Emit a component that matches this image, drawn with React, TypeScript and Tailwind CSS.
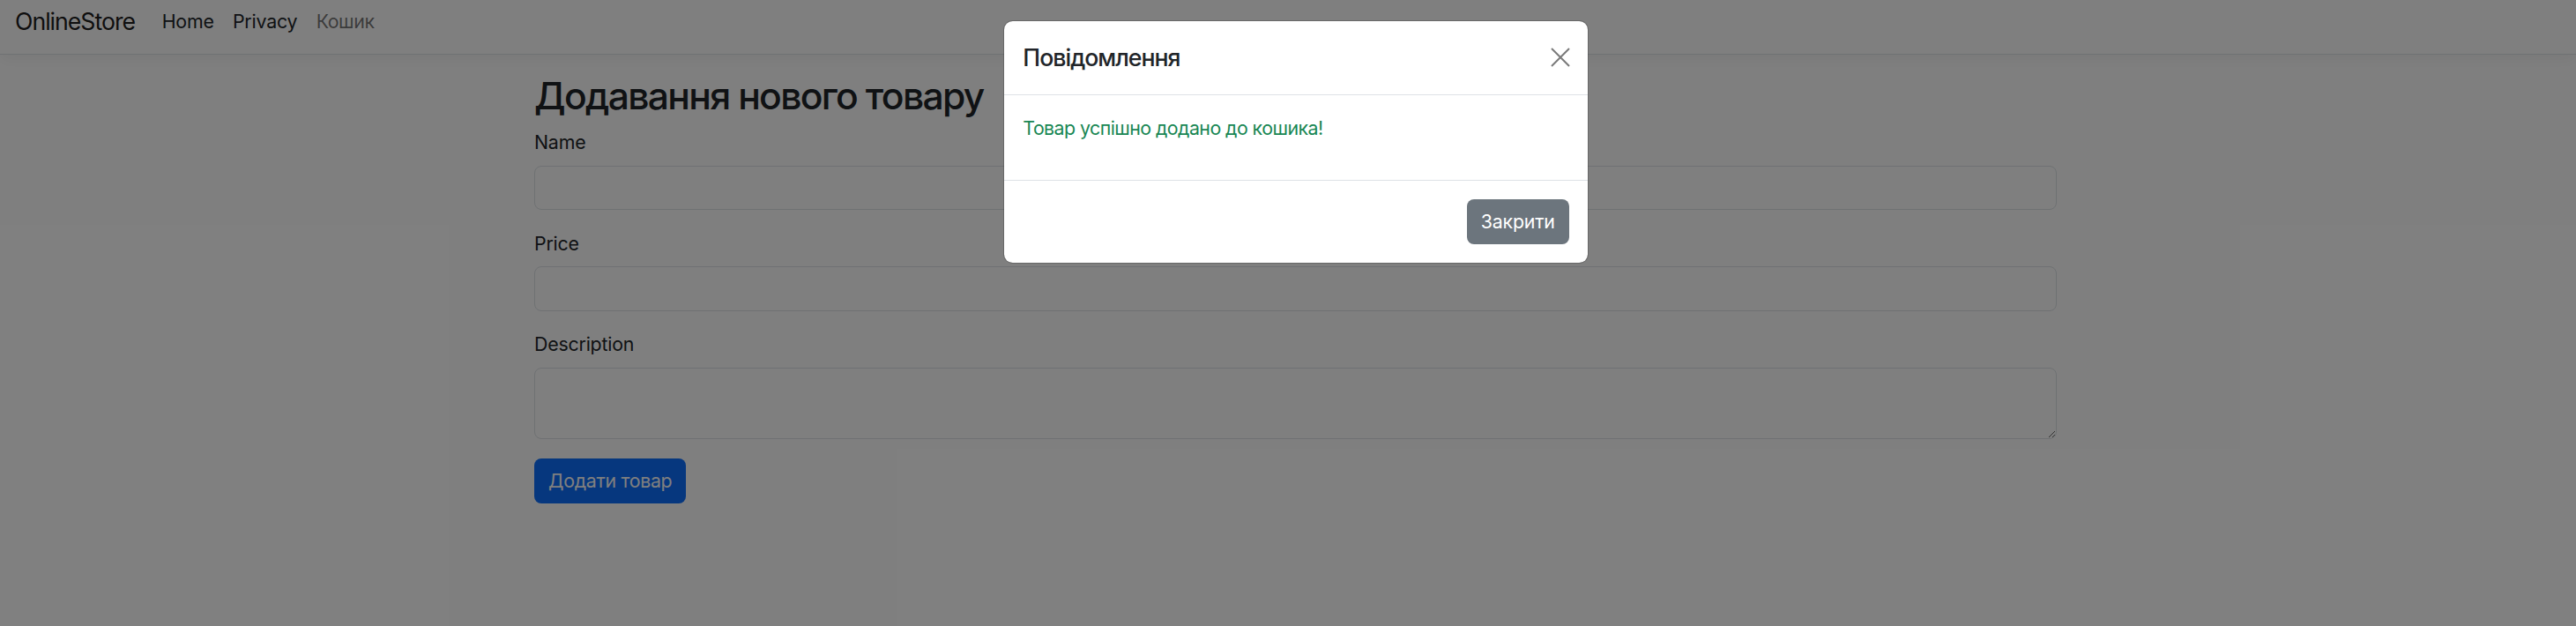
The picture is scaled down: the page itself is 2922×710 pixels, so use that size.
export default function App() {
  return (
    <div className="relative h-[710px] w-[2922px] overflow-hidden bg-white font-['Inter','Noto_Sans',sans-serif] text-[#212529]">
      <nav className="h-[62px] border-b-[1.33px] border-[#dee2e6] bg-white shadow-[0_5px_16px_rgba(0,0,0,0.05)]">
        <div className="flex h-[47px] items-center pl-[17px]">
          <span className="mr-[20px] text-[26.67px] leading-[40px] tracking-[-1px] text-black/90">OnlineStore</span>
          <ul className="flex">
            <li className="px-[10.67px] text-[21.33px] leading-[32px] tracking-[-0.2px] text-[#212529]">Home</li>
            <li className="px-[10.67px] text-[21.33px] leading-[32px] tracking-[-0.2px] text-[#212529]">Privacy</li>
            <li className="px-[10.67px] text-[21.33px] leading-[32px] tracking-[-0.4px] text-black/55">Кошик</li>
          </ul>
        </div>
      </nav>

      <main className="ml-[606px] w-[1727px] pt-[21px]">
        <h2 className="mb-[10.67px] text-[42.67px] font-medium leading-[51.2px] tracking-[-1.7px]">Додавання нового товару</h2>
        <form>
          <div className="mb-[21.33px]">
            <label className="mb-[10.67px] block text-[21.33px] leading-[32px] tracking-[-0.2px]">Name</label>
            <input className="block h-[50.67px] w-full rounded-[8px] border-[1.33px] border-[#dee2e6] bg-white px-[16px]" />
          </div>
          <div className="mb-[21.33px]">
            <label className="mb-[10.67px] block text-[21.33px] leading-[32px] tracking-[-0.2px]">Price</label>
            <input className="block h-[50.67px] w-full rounded-[8px] border-[1.33px] border-[#dee2e6] bg-white px-[16px]" />
          </div>
          <div className="mb-[21.33px]">
            <label className="mb-[10.67px] block text-[21.33px] leading-[32px] tracking-[-0.2px]">Description</label>
            <textarea className="block h-[81px] w-full rounded-[8px] border-[1.33px] border-[#dee2e6] bg-white px-[16px]" />
          </div>
          <button
            type="button"
            className="mt-[1px] h-[50.67px] rounded-[8px] bg-[#0d6efd] px-[16px] text-[21.33px] leading-[32px] tracking-[-0.3px] text-white"
          >
            Додати товар
          </button>
        </form>
      </main>

      <div className="absolute inset-0 bg-black/50" />

      <div className="absolute left-[1138px] top-[23px] w-[664px] rounded-[10.67px] border-[1.33px] border-black/[0.175] bg-white bg-clip-padding">
        <div className="flex items-center justify-between border-b-[1.33px] border-[#dee2e6] p-[21.33px]">
          <h5 className="text-[26.67px] font-medium leading-[40px] tracking-[-1px] text-[#212529]">Повідомлення</h5>
          <svg width="22" height="22" viewBox="0 0 22 22" className="mr-[-1px]">
            <path d="M1 1 L21 21 M21 1 L1 21" stroke="#7a7a7a" strokeWidth="2" fill="none" />
          </svg>
        </div>
        <div className="p-[21.33px]">
          <p className="mb-[21.33px] text-[21.33px] leading-[32px] tracking-[-0.55px] text-[#198754]">Товар успішно додано до кошика!</p>
        </div>
        <div className="flex justify-end border-t-[1.33px] border-[#dee2e6] p-[16px]">
          <button
            type="button"
            className="m-[5.33px] h-[50.67px] rounded-[8px] bg-[#6c757d] px-[16px] text-[21.33px] leading-[32px] tracking-[-0.2px] text-white"
          >
            Закрити
          </button>
        </div>
      </div>
    </div>
  );
}
